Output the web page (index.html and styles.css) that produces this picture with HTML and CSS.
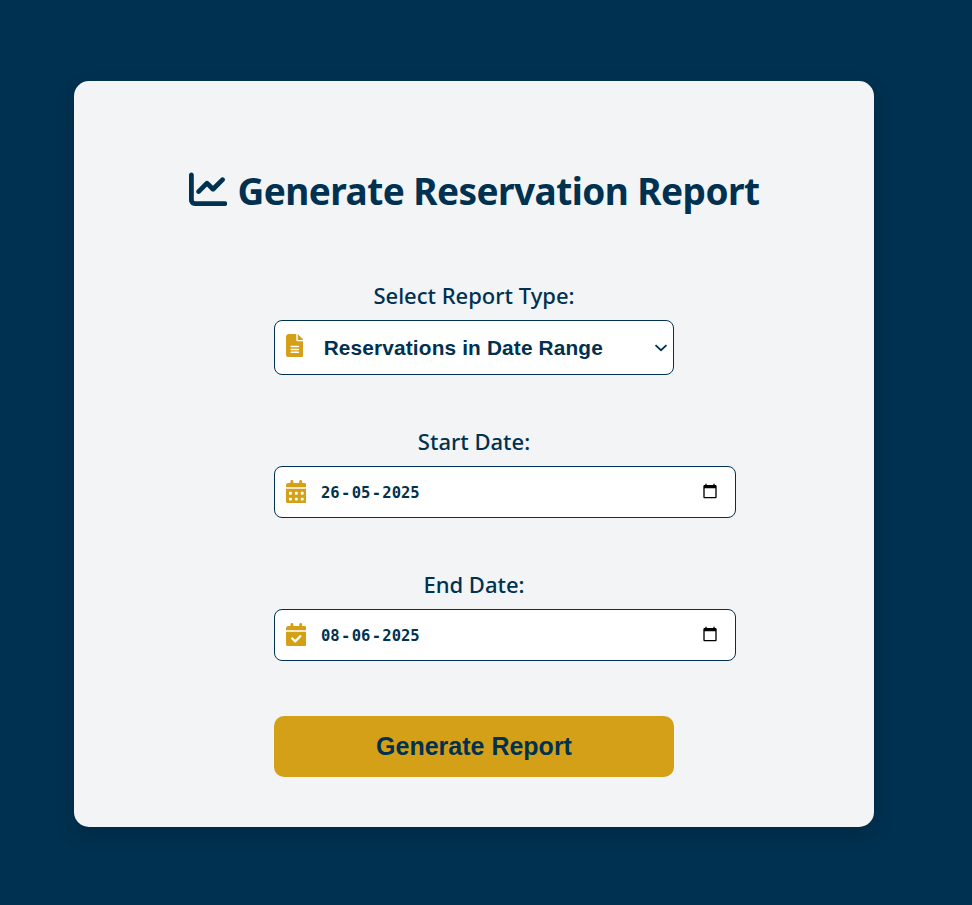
FILE: index.html
```html
<!DOCTYPE html>
<html lang="en">
<head>
<meta charset="utf-8">
<title>Generate Reservation Report</title>
<link rel="stylesheet" href="styles.css">
</head>
<body>
<main class="card">
  <h1 class="title">
    <svg class="title-icon" viewBox="0 0 512 512" fill="currentColor"><path d="M64 64c0-17.700-14.300-32-32-32S0 46.300 0 64V400c0 44.200 35.800 80 80 80H480c17.700 0 32-14.300 32-32s-14.300-32-32-32H80c-8.800 0-16-7.200-16-16V64zm406.600 86.600c12.500-12.500 12.500-32.800 0-45.300s-32.800-12.500-45.300 0L320 210.700l-57.400-57.400c-12.500-12.500-32.800-12.500-45.300 0l-112 112c-12.500 12.500-12.500 32.800 0 45.300s32.800 12.500 45.300 0L240 221.300l57.400 57.400c12.500 12.500 32.800 12.500 45.300 0l128-128z"/></svg>
    <span class="title-text">Generate Reservation Report</span>
  </h1>
  <form class="form">
    <div class="label"><span>Select Report Type:</span></div>
    <div class="field select">
      <svg class="icon icon-file" viewBox="0 0 384 512" fill="currentColor"><path d="M64 0C28.700 0 0 28.700 0 64V448c0 35.300 28.700 64 64 64H320c35.300 0 64-28.700 64-64V160H256c-17.700 0-32-14.300-32-32V0H64zM256 0V128H384L256 0zM112 256H272c8.800 0 16 7.200 16 16s-7.200 16-16 16H112c-8.800 0-16-7.200-16-16s7.200-16 16-16zm0 64H272c8.800 0 16 7.200 16 16s-7.200 16-16 16H112c-8.800 0-16-7.200-16-16s7.200-16 16-16zm0 64H272c8.800 0 16 7.200 16 16s-7.200 16-16 16H112c-8.800 0-16-7.200-16-16s7.200-16 16-16z"/></svg>
      <span class="select-text">Reservations in Date Range</span>
      <svg class="chevron" viewBox="0 0 14 8"><path d="M1.500 1.200 L7 6.200 L12.500 1.200" fill="none" stroke="currentColor" stroke-width="1.800"/></svg>
    </div>
    <div class="label"><span>Start Date:</span></div>
    <div class="field date">
      <svg class="icon icon-cal" viewBox="0 0 448 512" fill="currentColor"><path d="M128 0c17.700 0 32 14.300 32 32V64H288V32c0-17.700 14.300-32 32-32s32 14.300 32 32V64h48c26.500 0 48 21.500 48 48v48H0V112C0 85.500 21.500 64 48 64H96V32c0-17.700 14.300-32 32-32zM0 192H448V464c0 26.500-21.500 48-48 48H48c-26.500 0-48-21.500-48-48V192zm64 80v32c0 8.800 7.200 16 16 16h32c8.800 0 16-7.200 16-16V272c0-8.800-7.200-16-16-16H80c-8.800 0-16 7.200-16 16zm128 0v32c0 8.800 7.200 16 16 16h32c8.800 0 16-7.200 16-16V272c0-8.800-7.200-16-16-16H208c-8.800 0-16 7.200-16 16zm144-16c-8.800 0-16 7.200-16 16v32c0 8.800 7.200 16 16 16h32c8.800 0 16-7.200 16-16V272c0-8.800-7.200-16-16-16H336zM64 400v32c0 8.800 7.200 16 16 16h32c8.800 0 16-7.200 16-16V400c0-8.800-7.200-16-16-16H80c-8.800 0-16 7.200-16 16zm144-16c-8.800 0-16 7.200-16 16v32c0 8.800 7.200 16 16 16h32c8.800 0 16-7.200 16-16V400c0-8.800-7.200-16-16-16H208zm112 16v32c0 8.800 7.200 16 16 16h32c8.800 0 16-7.200 16-16V400c0-8.800-7.200-16-16-16H336c-8.800 0-16 7.200-16 16z"/></svg>
      <span class="date-text">26<span class="sep">-</span>05<span class="sep">-</span>2025</span>
      <svg class="picker" viewBox="0 0 24 24"><path d="M20 3h-1V1h-2v2H7V1H5v2H4c-1.100 0-2 .9-2 2v16c0 1.100.9 2 2 2h16c1.100 0 2-.9 2-2V5c0-1.100-.9-2-2-2zm0 18H4V8h16v13z"/></svg>
    </div>
    <div class="label"><span>End Date:</span></div>
    <div class="field date">
      <svg class="icon icon-cal" viewBox="0 0 448 512" fill="currentColor"><path d="M128 0c17.700 0 32 14.300 32 32V64H288V32c0-17.700 14.300-32 32-32s32 14.300 32 32V64h48c26.500 0 48 21.500 48 48v48H0V112C0 85.500 21.500 64 48 64H96V32c0-17.700 14.300-32 32-32zM0 192H448V464c0 26.500-21.500 48-48 48H48c-26.500 0-48-21.500-48-48V192zM329 305c9.400-9.400 9.400-24.600 0-33.900s-24.600-9.400-33.900 0l-95 95-47-47c-9.400-9.400-24.600-9.400-33.900 0s-9.400 24.600 0 33.900l64 64c9.400 9.400 24.600 9.400 33.900 0L329 305z"/></svg>
      <span class="date-text">08<span class="sep">-</span>06<span class="sep">-</span>2025</span>
      <svg class="picker" viewBox="0 0 24 24"><path d="M20 3h-1V1h-2v2H7V1H5v2H4c-1.100 0-2 .9-2 2v16c0 1.100.9 2 2 2h16c1.100 0 2-.9 2-2V5c0-1.100-.9-2-2-2zm0 18H4V8h16v13z"/></svg>
    </div>
    <button class="submit" type="button">Generate Report</button>
  </form>
</main>
</body>
</html>
```

FILE: styles.css
```css
* { box-sizing: border-box; }

body {
  margin: 0;
  padding: 81px 24px 78px 0;
  min-height: 905px;
  background: #003150;
  color: #003150;
  font-family: "Noto Sans", "Open Sans", sans-serif;
}

.card {
  width: 800px;
  height: 746px;
  margin: 0 auto;
  padding-top: 84px;
  background: #f2f4f6;
  border-radius: 15px;
  box-shadow: 0 8px 20px rgba(0, 0, 0, 0.15);
}

.title {
  display: flex;
  align-items: center;
  height: 51px;
  margin: 0 0 64px 114.700px;
  font-size: 37px;
  font-weight: 700;
  line-height: 51px;
  letter-spacing: -0.560px;
  white-space: nowrap;
}

.title-icon {
  flex: none;
  width: 38.400px;
  height: 38.400px;
  margin: 0 10.500px 2px 0;
}

.form {
  display: flex;
  flex-direction: column;
  width: 400px;
  margin: 0 auto;
}

.label {
  height: 30px;
  margin-bottom: 10px;
  font-size: 22px;
  font-weight: 500;
  line-height: 30px;
  text-align: center;
  white-space: nowrap;
}

.field {
  display: flex;
  align-items: center;
  padding-left: 11px;
  background: #fff;
  border: 1px solid #003150;
  border-radius: 8px;
}

.select {
  height: 55px;
  margin-bottom: 51px;
}

.date {
  width: 462px;
  height: 52px;
  margin-bottom: 51px;
}

.icon {
  flex: none;
  height: 23.500px;
  color: #d4a017;
}

.icon-file {
  width: 17.600px;
  margin: 0 20.400px 4px -0.300px;
}

.icon-cal {
  width: 20.600px;
  margin: 0 14.700px 1px -0.300px;
}

.select-text {
  font: bold 20.800px "Liberation Sans", Arial, sans-serif;
  letter-spacing: 0.160px;
  white-space: nowrap;
}

.chevron {
  width: 14px;
  height: 8px;
  margin: 0 5px 0 auto;
}

.date-text {
  padding-top: 2px;
  font: bold 15.500px "DejaVu Sans Mono", monospace;
  white-space: nowrap;
}

.sep {
  display: inline-block;
  width: 12px;
  text-align: center;
}

.picker {
  width: 16px;
  height: 16px;
  margin: 0 17.500px 2px auto;
}

.submit {
  height: 61px;
  margin-top: 4px;
  padding: 0;
  border: 0;
  border-radius: 10px;
  background: #d4a017;
  color: #003150;
  font: bold 25px "Liberation Sans", Arial, sans-serif;
}
```
